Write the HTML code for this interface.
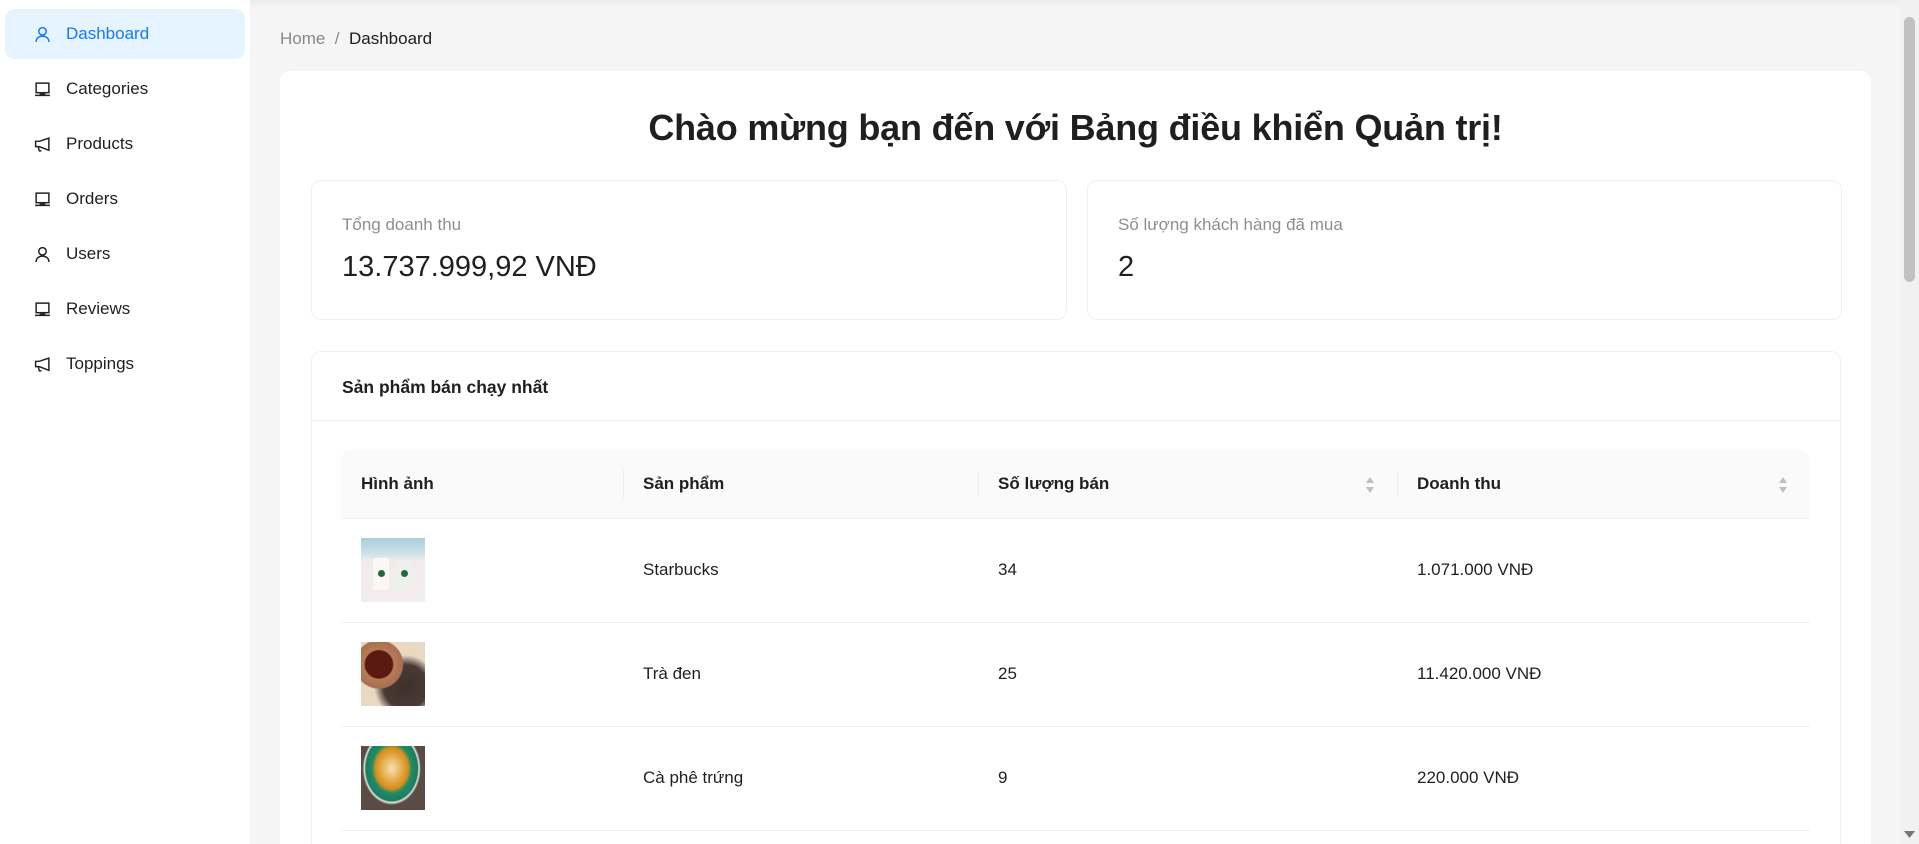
<!DOCTYPE html>
<html><head><meta charset="utf-8"><style>
*{box-sizing:border-box;margin:0;padding:0}
html{width:1919px;height:844px;overflow:hidden}
body{width:1919px;height:844px;overflow:hidden;background:#f5f5f5;font-family:"Liberation Sans","Noto Sans CJK SC",sans-serif;color:rgba(0,0,0,.88);position:relative}
.side{position:absolute;left:0;top:0;width:250px;height:844px;background:#fff}
.item{position:absolute;left:5px;width:240px;height:50px;border-radius:10px;display:flex;align-items:center;padding-left:29px;font-size:17px;color:rgba(0,0,0,.88)}
.item svg{width:17px;height:17px;margin-right:15px;flex:none}
.item.act{background:#e6f4ff;color:#1677ff}
.topbar{position:absolute;left:250px;top:0;width:1650px;height:8px;background:linear-gradient(#e9ecec,#f5f5f5)}
.bc{position:absolute;left:280px;top:29px;font-size:17px;color:rgba(0,0,0,.45)}
.bc b{font-weight:400;color:rgba(0,0,0,.88)}
.main{position:absolute;left:280px;top:71px;width:1591px;height:773px;background:#fff;border-radius:10px 10px 0 0;overflow:hidden}
h1{position:absolute;left:0;width:100%;top:36px;text-align:center;font-size:36px;font-weight:700;letter-spacing:-.2px}
.stat{position:absolute;top:109px;height:140px;border:1px solid #f0f0f0;border-radius:10px;padding:0 30px}
.stat .l{margin-top:34px;font-size:17px;color:rgba(0,0,0,.45)}
.stat .v{margin-top:16px;font-size:29px}
.pc{position:absolute;left:31px;top:280px;width:1530px;height:493px;border:1px solid #f0f0f0;border-bottom:none;border-radius:10px 10px 0 0}
.pc .h{height:69px;border-bottom:1px solid #f0f0f0;padding-left:30px;line-height:70px;font-size:17.5px;font-weight:700}
table{position:absolute;left:29px;top:98px;width:1469px;border-collapse:collapse;font-size:17px}
th{background:#fafafa;height:68px;text-align:left;font-weight:700;padding-left:20px;position:relative;border-bottom:1px solid #f0f0f0}
th:first-child{border-top-left-radius:10px}th:last-child{border-top-right-radius:10px}
th .sep{position:absolute;left:0;top:20px;width:1px;height:28px;background:#eee}
th .so{position:absolute;right:22px;top:26px;width:10px;height:18px}
td{height:104px;border-bottom:1px solid #f0f0f0;padding-left:20px}
.img{width:64px;height:64px}
.sb{position:absolute;left:1900px;top:0;width:19px;height:844px;background:#f1f1f1}
.thumb{position:absolute;left:1904px;top:17px;width:11px;height:265px;background:#c1c1c1;border-radius:6px}
</style></head><body>
<div class="side">
<div class="item act" style="top:9px"><svg viewBox="0 0 16 16" fill="none" stroke="#1677ff" stroke-width="1.4"><circle cx="8" cy="5" r="3.5"/><path d="M2 15c0-3.5 2.7-5.5 6-5.5s6 2 6 5.5"/></svg>Dashboard</div>
<div class="item" style="top:64px"><svg viewBox="0 0 16 16" fill="none" stroke="#222" stroke-width="1.4"><rect x="2" y="2" width="12" height="9"/><path d="M1 13.5h14M6 13.5v-1h4v1"/></svg>Categories</div>
<div class="item" style="top:119px"><svg viewBox="0 0 16 16" fill="none" stroke="#222" stroke-width="1.4"><path d="M14 2L5 5H1.5v5H5l9 3.5zM4 10l1 4h2"/></svg>Products</div>
<div class="item" style="top:174px"><svg viewBox="0 0 16 16" fill="none" stroke="#222" stroke-width="1.4"><rect x="2" y="2" width="12" height="9"/><path d="M1 13.5h14M6 13.5v-1h4v1"/></svg>Orders</div>
<div class="item" style="top:229px"><svg viewBox="0 0 16 16" fill="none" stroke="#222" stroke-width="1.4"><circle cx="8" cy="5" r="3.5"/><path d="M2 15c0-3.5 2.7-5.5 6-5.5s6 2 6 5.5"/></svg>Users</div>
<div class="item" style="top:284px"><svg viewBox="0 0 16 16" fill="none" stroke="#222" stroke-width="1.4"><rect x="2" y="2" width="12" height="9"/><path d="M1 13.5h14M6 13.5v-1h4v1"/></svg>Reviews</div>
<div class="item" style="top:339px"><svg viewBox="0 0 16 16" fill="none" stroke="#222" stroke-width="1.4"><path d="M14 2L5 5H1.5v5H5l9 3.5zM4 10l1 4h2"/></svg>Toppings</div>
</div>
<div class="topbar"></div>
<div class="bc">Home &nbsp;/&nbsp; <b>Dashboard</b></div>
<div class="main">
<h1>Chào mừng bạn đến với Bảng điều khiển Quản trị!</h1>
<div class="stat" style="left:31px;width:756px"><div class="l">Tổng doanh thu</div><div class="v">13.737.999,92 VNĐ</div></div>
<div class="stat" style="left:807px;width:755px"><div class="l">Số lượng khách hàng đã mua</div><div class="v">2</div></div>
<div class="pc"><div class="h">Sản phẩm bán chạy nhất</div>
<table>
<tr><th style="width:282px">Hình ảnh</th><th style="width:355px"><span class="sep"></span>Sản phẩm</th><th style="width:419px"><span class="sep"></span>Số lượng bán<svg class="so" viewBox="0 0 10 18"><path d="M5 1L9 7H1z" fill="#bfbfbf"/><path d="M5 17L9 11H1z" fill="#bfbfbf"/></svg></th><th><span class="sep"></span>Doanh thu<svg class="so" viewBox="0 0 10 18"><path d="M5 1L9 7H1z" fill="#bfbfbf"/><path d="M5 17L9 11H1z" fill="#bfbfbf"/></svg></th></tr>
<tr><td><div class="img" style="background:linear-gradient(#a9cfdc 0,#cfe1e8 25%,#f1ecec 35%,#f3eeee 100%);position:relative"><div style="position:absolute;left:12px;top:20px;width:16px;height:32px;background:#fbf7f4;border-radius:2px"></div><div style="position:absolute;left:35px;top:22px;width:16px;height:30px;background:#eef0ee"></div><div style="position:absolute;left:17px;top:32px;width:7px;height:7px;background:#1d6b3c;border-radius:50%"></div><div style="position:absolute;left:40px;top:32px;width:7px;height:7px;background:#1d6b3c;border-radius:50%"></div></div></td><td>Starbucks</td><td>34</td><td>1.071.000 VNĐ</td></tr>
<tr><td><div class="img" style="background:radial-gradient(circle at 28% 35%,#5a1a12 0,#5a1a12 22%,#b77c56 24%,#a86f4f 38%,transparent 40%),radial-gradient(circle at 70% 70%,#3d302d 0,#4a3a36 35%,transparent 50%),#e9d8c2"></div></td><td>Trà đen</td><td>25</td><td>11.420.000 VNĐ</td></tr>
<tr><td><div class="img" style="background:radial-gradient(ellipse at 48% 35%,#f6e2b5 0,#e0a43a 25%,#d58e1c 35%,#1e8c68 42%,#1b7d5c 55%,#e5e5e5 58%,#5a4c45 62%),#4d413c"></div></td><td>Cà phê trứng</td><td>9</td><td>220.000 VNĐ</td></tr>
</table></div>
</div>
<div class="sb"></div><div class="thumb"></div>
<svg style="position:absolute;left:1904px;top:831px" width="11" height="8" viewBox="0 0 11 8"><path d="M0 0h11L5.5 7z" fill="#777"/></svg>
</body></html>
